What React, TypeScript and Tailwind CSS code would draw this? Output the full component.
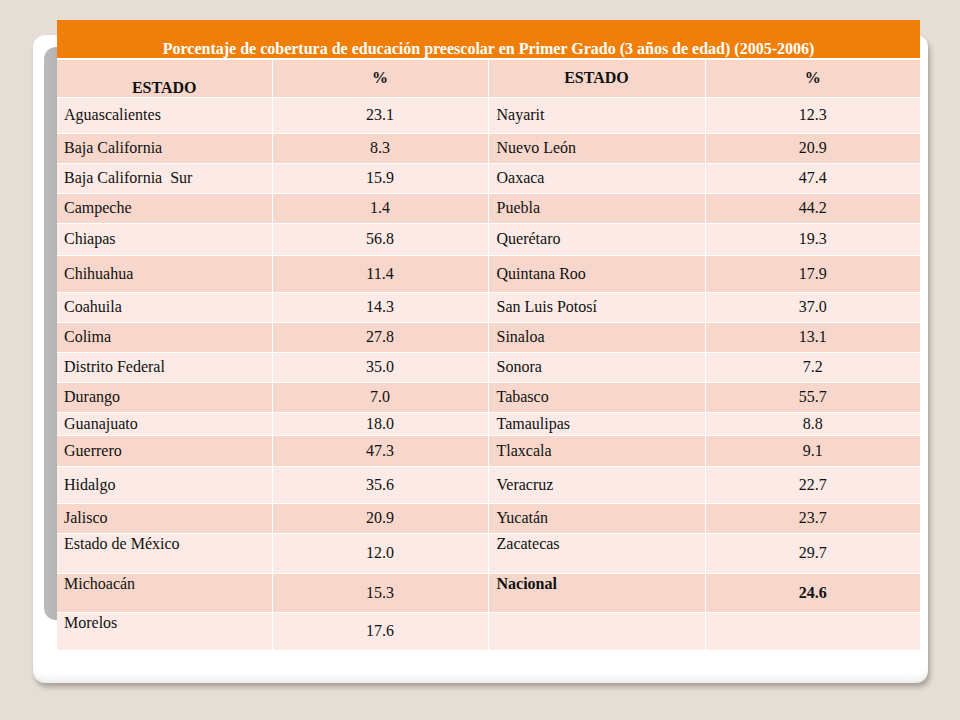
const rows: [string, string, string, string, number][] = [
  ["Aguascalientes", "23.1", "Nayarit", "12.3", 36],
  ["Baja California", "8.3", "Nuevo León", "20.9", 30],
  ["Baja California  Sur", "15.9", "Oaxaca", "47.4", 30],
  ["Campeche", "1.4", "Puebla", "44.2", 30],
  ["Chiapas", "56.8", "Querétaro", "19.3", 32],
  ["Chihuahua", "11.4", "Quintana Roo", "17.9", 37],
  ["Coahuila", "14.3", "San Luis Potosí", "37.0", 30],
  ["Colima", "27.8", "Sinaloa", "13.1", 30],
  ["Distrito Federal", "35.0", "Sonora", "7.2", 30],
  ["Durango", "7.0", "Tabasco", "55.7", 30],
  ["Guanajuato", "18.0", "Tamaulipas", "8.8", 23],
  ["Guerrero", "47.3", "Tlaxcala", "9.1", 31],
  ["Hidalgo", "35.6", "Veracruz", "22.7", 37],
  ["Jalisco", "20.9", "Yucatán", "23.7", 30],
  ["Estado de México", "12.0", "Zacatecas", "29.7", 40],
  ["Michoacán", "15.3", "Nacional", "24.6", 39],
  ["Morelos", "17.6", "", "", 38],
]

export default function App() {
  return (
    <div className="w-[960px] h-[720px] overflow-hidden bg-[#e4ded4] font-['Liberation_Serif',serif] text-[16px] text-[#111]">
      <div className="grid">
        {/* slide card with grey side tab */}
        <div className="col-start-1 row-start-1 ml-[33px] mt-[35px] h-[648px] w-[895px] rounded-[12px] bg-white pl-[11px] pt-[12px] shadow-[inset_0_-8px_8px_-6px_rgba(0,0,0,0.12),2px_4px_5px_rgba(60,50,40,0.35)]">
          <div className="h-[573px] w-[30px] rounded-l-[12px] bg-linear-to-r from-[#bcbcbc] to-[#a7a7a7]" />
        </div>

        {/* data table */}
        <table className="col-start-1 row-start-1 ml-[57px] mt-[20px] w-[863px] self-start table-fixed border-collapse">
          <colgroup>
            <col className="w-[215px]" />
            <col className="w-[216px]" />
            <col className="w-[217px]" />
            <col className="w-[215px]" />
          </colgroup>
          <thead>
            <tr className="h-[39px] border-b-2 border-white bg-[#f07f0a]">
              <th colSpan={4} className="align-bottom pb-0 text-center font-bold leading-[18px] text-white">
                Porcentaje de cobertura de educación preescolar en Primer Grado (3 años de edad) (2005-2006)
              </th>
            </tr>
            <tr className="h-[38px] border-b border-white bg-[#f7d7cb] font-bold">
              <th className="border-r border-white align-bottom text-center leading-[18px]">ESTADO</th>
              <th className="border-r border-white align-middle text-center">%</th>
              <th className="border-r border-white align-middle text-center">ESTADO</th>
              <th className="align-middle text-center">%</th>
            </tr>
          </thead>
          <tbody>
            {rows.map(([a, av, b, bv, h], i) => {
              const top = i >= 14
              const bold = b === "Nacional"
              return (
                <tr
                  key={a}
                  style={{ height: h }}
                  className={`border-b border-white leading-[18px] ${i % 2 === 0 ? "bg-[#fbeae6]" : "bg-[#f7d7cb]"}`}
                >
                  <td className={`border-r border-white pl-[7px] whitespace-pre ${top ? "align-top pt-[1px]" : "align-middle"}`}>{a}</td>
                  <td className="border-r border-white text-center align-middle">{av}</td>
                  <td className={`border-r border-white pl-[8px] ${bold ? "font-bold" : ""} ${top ? "align-top pt-[1px]" : "align-middle"}`}>{b}</td>
                  <td className={`text-center align-middle ${bold ? "font-bold" : ""}`}>{bv}</td>
                </tr>
              )
            })}
          </tbody>
        </table>
      </div>
    </div>
  )
}
